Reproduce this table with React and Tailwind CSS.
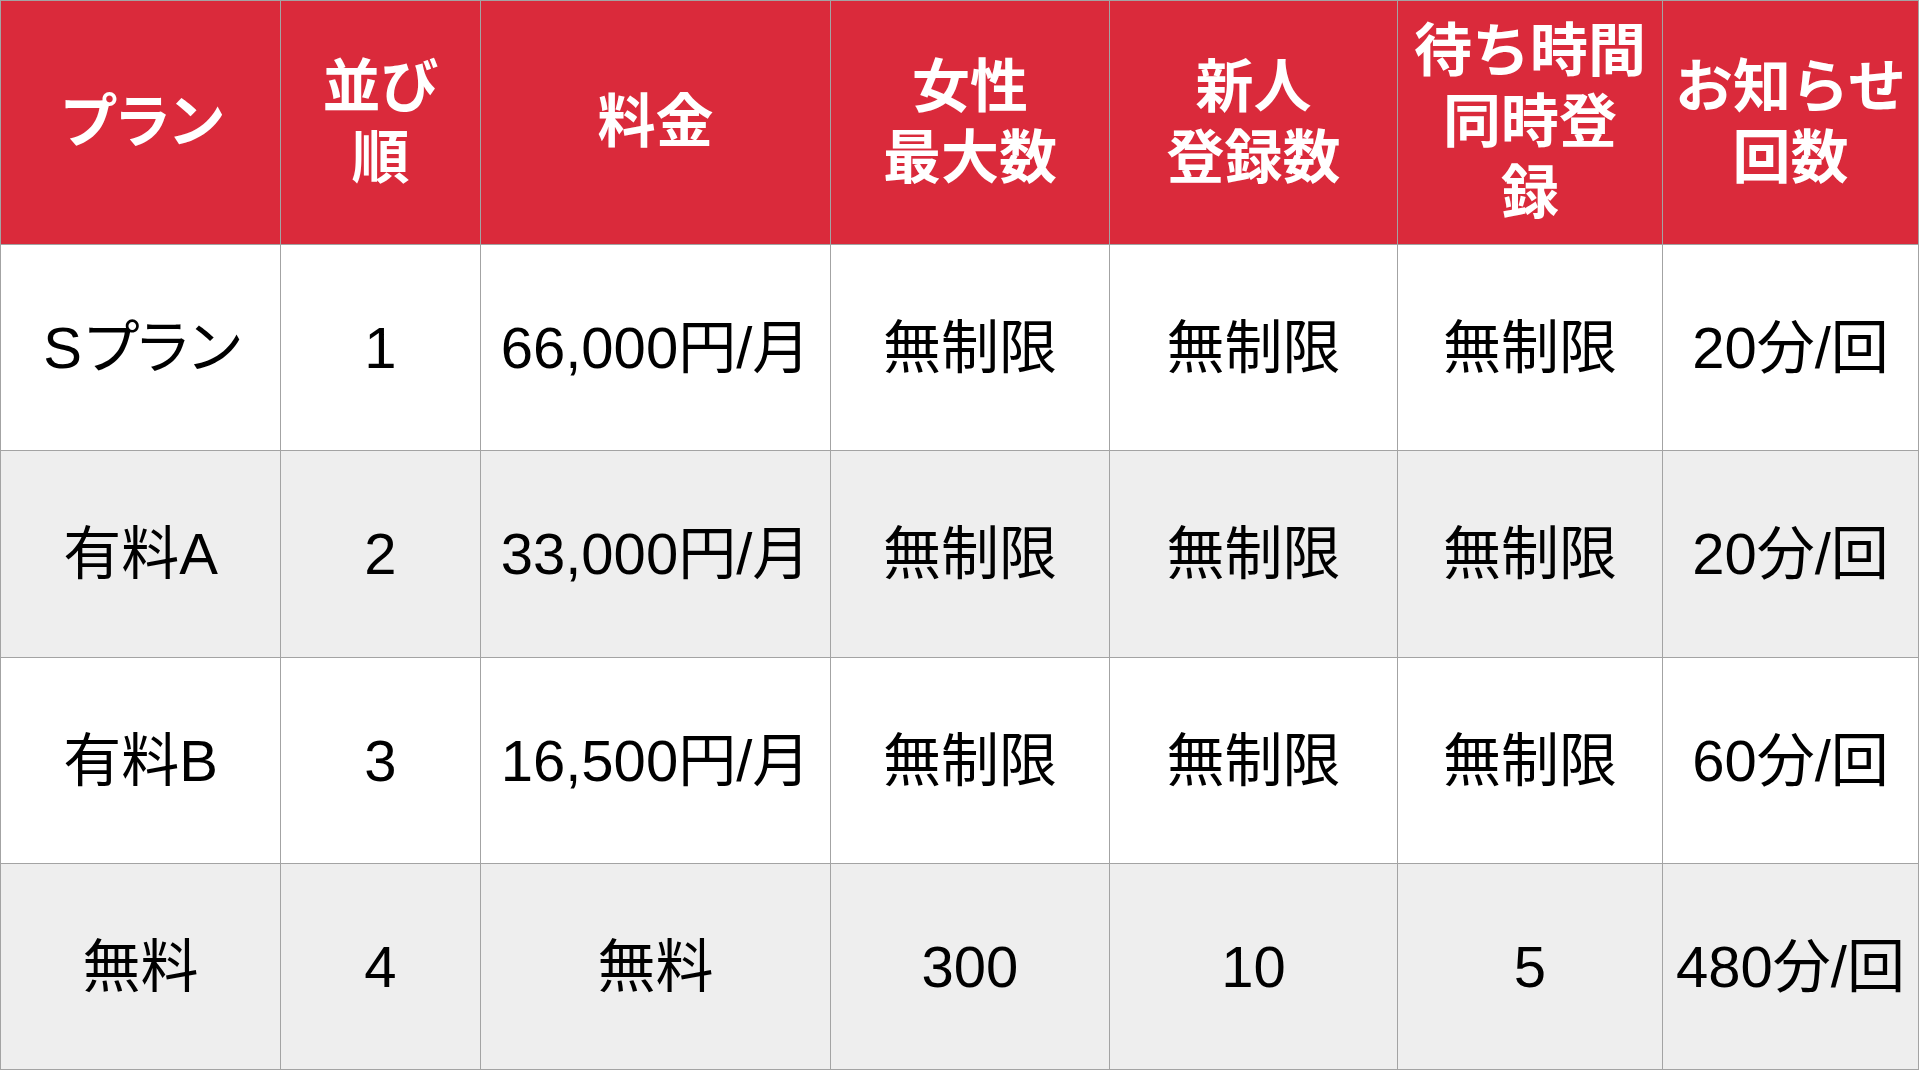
import React from "react";

const headers = [
  [<span key="p" className="tracking-[-4px]">プラン</span>],
  ["並び", "順"],
  ["料金"],
  ["女性", "最大数"],
  ["新人", "登録数"],
  ["待ち時間", "同時登", "録"],
  ["お知らせ", "回数"],
];

const splan = (
  <span>
    S<span className="tracking-[-6px]">プラン</span>
  </span>
);

const rows = [
  { bg: "bg-white", cells: [splan, "1", "66,000円/月", "無制限", "無制限", "無制限", "20分/回"] },
  { bg: "bg-[#eeeeee]", cells: ["有料A", "2", "33,000円/月", "無制限", "無制限", "無制限", "20分/回"] },
  { bg: "bg-white", cells: ["有料B", "3", "16,500円/月", "無制限", "無制限", "無制限", "60分/回"] },
  { bg: "bg-[#eeeeee]", cells: ["無料", "4", "無料", "300", "10", "5", "480分/回"] },
];

export default function App() {
  return (
    <div className="w-[1919px] h-[1080px] bg-white overflow-hidden">
      <div
        className="grid w-[1919px] border-l border-t border-[#a3a3a3] grid-cols-[280px_200px_350px_279px_288px_265px_256px] grid-rows-[244px_206px_207px_206px_206px]"
        style={{ fontFamily: '"Liberation Sans", "Noto Sans CJK JP", sans-serif' }}
      >
        {headers.map((lines, i) => (
          <div
            key={"h" + i}
            className="flex flex-col items-center justify-center pb-[10px] border-r border-b border-[#a3a3a3] bg-[#da2a3b] text-white text-[58px] leading-[71px] font-bold whitespace-nowrap"
            style={{ fontFamily: '"Noto Sans CJK JP", sans-serif' }}
          >
            {lines.map((l, j) => (
              <div key={j} className="h-[71px] leading-[71px]">{l}</div>
            ))}
          </div>
        ))}
        {rows.map((r, ri) =>
          r.cells.map((c, ci) => (
            <div
              key={ri + "-" + ci}
              className={`flex items-center justify-center border-r border-b border-[#a3a3a3] ${r.bg} text-black text-[58px] leading-none whitespace-nowrap`}
            >
              {c}
            </div>
          ))
        )}
      </div>
    </div>
  );
}
